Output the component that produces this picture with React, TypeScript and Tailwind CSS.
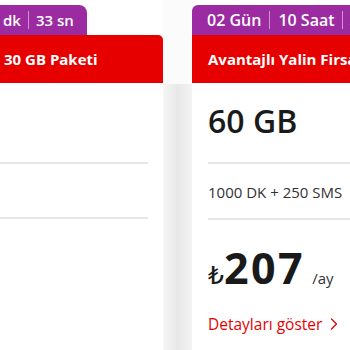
import React from 'react';
import { ChevronRight } from 'lucide-react';

const font = { fontFamily: '"Open Sans", "DejaVu Sans", sans-serif' };

export default function App() {
  return (
    <div className="w-[350px] h-[350px] overflow-hidden bg-white flex" style={font}>
      {/* left card, cut off */}
      <div className="w-[163px] shrink-0 flex flex-col">
        <div className="mt-[5px] h-[30px] w-[87px] bg-[#9c2aa0] rounded-tr-[8px] flex items-center pl-[3px] text-white text-[15px] font-semibold">
          <span>dk</span>
          <span className="mx-[7px] h-[18px] w-px shrink-0 bg-white/50" />
          <span>33 sn</span>
        </div>
        <div className="h-[48px] bg-[#e60000] rounded-tr-[5px] flex items-center pl-[4px] text-white text-[15px] font-bold whitespace-nowrap">
          30 GB Paketi
        </div>
        <div className="flex-1 bg-white pr-[15px] shadow-[2px_0_3px_rgba(0,0,0,0.04)]">
          <div className="mt-[79px] h-[2px] bg-[#e6e6e6]" />
          <div className="mt-[53px] h-[2px] bg-[#e6e6e6]" />
        </div>
      </div>

      {/* gap between cards */}
      <div className="w-[29px] shrink-0 flex flex-col">
        <div className="h-[84px] bg-[#fbfbfb]" />
        <div className="flex-1 bg-linear-to-r from-[#f6f6f6] via-[#e8e8e8] to-[#f3f3f3]" />
      </div>

      {/* right card */}
      <div className="flex-1 min-w-0 flex flex-col">
        <div className="mt-[5px] h-[30px] bg-[#9c2aa0] rounded-tl-[6px] flex items-center pl-[15px] text-white text-[16px] font-semibold whitespace-nowrap overflow-hidden">
          <span className="shrink-0">02 Gün</span>
          <span className="mx-[8px] h-[18px] w-px shrink-0 bg-white/50" />
          <span className="shrink-0">10 Saat</span>
          <span className="mx-[7px] h-[18px] w-px shrink-0 bg-white/50" />
          <span className="shrink-0">33 dk</span>
        </div>
        <div className="h-[48px] bg-[#e60000] flex items-center pl-[16px] text-white text-[15px] font-bold whitespace-nowrap">
          Avantajlı Yalin Firsat 60 GB Paketi
        </div>
        <div className="flex-1 bg-white pl-[16px]">
          <div className="pt-[22px] text-[32px] leading-[32px] font-semibold text-[#1a1a1a]">60 GB</div>
          <div className="mt-[25px] h-[2px] bg-[#e6e6e6]" />
          <div className="mt-[18px] text-[15px] leading-[20px] text-[#333]">1000 DK + 250 SMS</div>
          <div className="mt-[16px] h-[2px] bg-[#e6e6e6]" />
          <div className="mt-[26px] flex items-baseline text-[#1a1a1a]">
            <span className="text-[25px] leading-none">₺</span>
            <span className="text-[43px] leading-[43px] font-bold tracking-[2.5px]">207</span>
            <span className="ml-[7px] text-[15px] text-[#333]">/ay</span>
          </div>
          <div className="mt-[24px] flex items-center text-[15.5px] leading-[20px] text-[#e60000]">
            <span>Detayları göster</span>
            <ChevronRight className="ml-[2px] w-[20px] h-[20px]" strokeWidth={1.5} />
          </div>
        </div>
      </div>
    </div>
  );
}
